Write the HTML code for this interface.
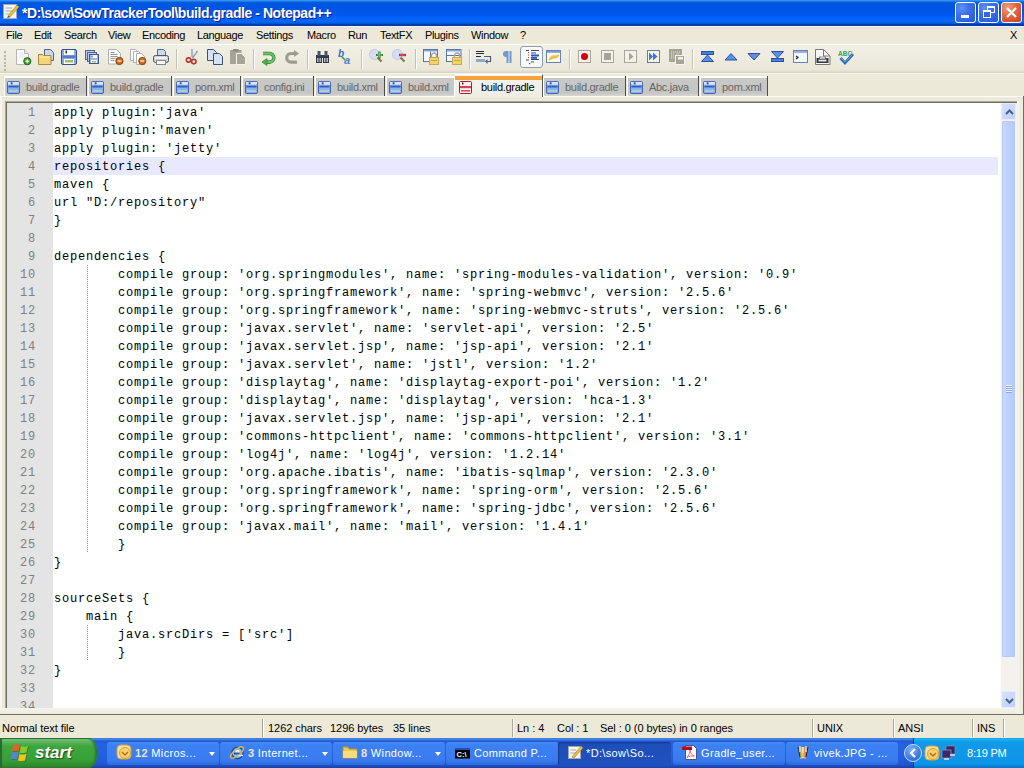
<!DOCTYPE html>
<html><head><meta charset="utf-8"><style>
*{margin:0;padding:0;box-sizing:border-box}
html,body{width:1024px;height:768px;overflow:hidden;background:#ECE9D8;font-family:"Liberation Sans",sans-serif;font-size:11px;color:#000}
.a{position:absolute}
#title{left:0;top:0;width:1024px;height:26px;background:linear-gradient(to bottom,#3B99FF 0px,#2C86F2 1px,#0D62D8 2px,#0058DE 3px,#0055E3 6px,#0055E8 12px,#0058F0 15px,#0064FC 18px,#0A66FA 21px,#0062EA 23px,#0047B8 24px,#0036A0 25px,#0036A0 26px)}
#ttl{left:22px;top:5px;color:#fff;font-weight:bold;font-size:14px;letter-spacing:-0.45px;white-space:nowrap;text-shadow:1px 1px 0 #0A1E8C}
.tb{top:2px;width:21px;height:21px;border:1px solid #fff;border-radius:3px}
.mi{top:29px;white-space:nowrap;letter-spacing:-0.35px}
.sep{top:49px;width:2px;height:20px;border-left:1px solid #C5C2B2;border-right:1px solid #fff}
.tab{top:76px;height:20px;background:linear-gradient(to bottom,#fff 0,#fff 2px,#C8C8C6 2px,#C6C6C4 17px,#D8D7D0 20px);border-right:1px solid #4E4D47;border-left:1px solid #fff}
.tab span{position:absolute;top:5px;white-space:nowrap;color:#666;letter-spacing:-0.3px}
.tab svg{position:absolute;left:2px;top:5px}
#ed{left:5px;top:101px;width:1013px;height:608px;border-top:1px solid #ACA899;border-left:1px solid #ACA899}
#ed2{left:6px;top:102px;width:1011px;height:606px;border-top:1px solid #716F64;border-left:1px solid #716F64;background:#fff;overflow:hidden}
#margin{left:0;top:0;width:46px;height:606px;background:#E4E4E4}
.ln{left:0;width:29px;text-align:right;font-family:"Liberation Mono",monospace;font-size:12px;letter-spacing:0.8px;color:#808080;height:18px;line-height:18px}
.cl{left:47px;font-family:"Liberation Mono",monospace;font-size:12px;letter-spacing:0.8px;color:#000;white-space:pre;height:18px;line-height:18px}
#cur{left:46px;top:54px;width:945px;height:18px;background:#E8E8FF}
.st{top:722px;white-space:nowrap;letter-spacing:-0.05px}
.ss{top:719px;width:2px;height:18px;border-left:1px solid #ACA899;border-right:1px solid #fff}
#task{left:0;top:738px;width:1024px;height:30px;background:linear-gradient(to bottom,#3168D5 0,#4993E6 1px,#2157D7 3px,#2663E0 6px,#245DDB 20px,#2157D7 26px,#1941A5 30px)}
.btn{top:742px;height:23px;border-radius:3px;background:linear-gradient(to bottom,#4B8BF5 0,#3C81F3 3px,#3A7BEF 18px,#2F68D8 23px);color:#fff;white-space:nowrap}
.btn span{position:absolute;left:39px;top:5px;letter-spacing:0.35px}
</style></head><body>

<div id="title" class="a"></div>
<svg class="a" style="left:2px;top:2px" width="18" height="18" viewBox="0 0 18 18">
<rect x="1.5" y="2.5" width="13" height="14" fill="#F4F4F0" stroke="#A0A8B8"/>
<line x1="3.5" y1="6" x2="10" y2="6" stroke="#C0A0A0"/><line x1="3.5" y1="9" x2="10" y2="9" stroke="#A0A0C0"/><line x1="3.5" y1="12" x2="8" y2="12" stroke="#A0C0A0"/>
<path d="M6 14 L15 3 L17 5 L8 15 Z" fill="#E8C040" stroke="#A08020" stroke-width="0.6"/>
<path d="M6 14 L5.2 16 L8 15 Z" fill="#403020"/>
</svg>
<div id="ttl" class="a">*D:\sow\SowTrackerTool\build.gradle - Notepad++</div>
<div class="a tb" style="left:955px;background:radial-gradient(circle at 30% 25%,#5E92F8 0,#3C6FE8 40%,#2558D8 100%)"><div class="a" style="left:5px;top:12px;width:8px;height:3px;background:#fff"></div></div>
<div class="a tb" style="left:978px;background:radial-gradient(circle at 30% 25%,#5E92F8 0,#3C6FE8 40%,#2558D8 100%)">
<div class="a" style="left:8px;top:3px;width:8px;height:7px;border:1px solid #fff;border-top-width:2px"></div>
<div class="a" style="left:4px;top:7px;width:8px;height:8px;border:1px solid #fff;border-top-width:2px;background:#3265E0"></div></div>
<div class="a tb" style="left:1001px;background:radial-gradient(circle at 30% 25%,#F0A080 0,#E46440 45%,#C8401E 100%)">
<svg class="a" style="left:3px;top:3px" width="13" height="13" viewBox="0 0 13 13"><path d="M2 2 L11 11 M11 2 L2 11" stroke="#fff" stroke-width="2.2"/></svg></div>
<div class="a" style="left:0;top:26px;width:1024px;height:4px;background:linear-gradient(to bottom,#F2F2F6 0,#F2F2F6 1px,#E6E4E0 1px,#E6E4DE 3px,#ECE9D8 4px)"></div>
<div class="a mi" style="left:6px">File</div>
<div class="a mi" style="left:34px">Edit</div>
<div class="a mi" style="left:64px">Search</div>
<div class="a mi" style="left:108px">View</div>
<div class="a mi" style="left:142px">Encoding</div>
<div class="a mi" style="left:197px">Language</div>
<div class="a mi" style="left:256px">Settings</div>
<div class="a mi" style="left:307px">Macro</div>
<div class="a mi" style="left:348px">Run</div>
<div class="a mi" style="left:380px">TextFX</div>
<div class="a mi" style="left:425px">Plugins</div>
<div class="a mi" style="left:471px">Window</div>
<div class="a mi" style="left:520px">?</div>
<div class="a mi" style="left:1010px">X</div>
<div class="a" style="left:0;top:44px;width:1024px;height:1px;background:#fff"></div>
<div class="a" style="left:0;top:45px;width:1024px;height:28px;background:linear-gradient(to bottom,#F1EFE5 0,#EFEDE1 10px,#EAE7D7 25px,#DDD9C8 27px,#D4D0BE 28px)"></div>
<div class="a" style="left:0;top:73px;width:1024px;height:1px;background:#F6F4EC"></div>
<div class="a" style="left:4px;top:51px;width:2px;height:2px;background:#B8B5A5"></div>
<div class="a" style="left:4px;top:55px;width:2px;height:2px;background:#B8B5A5"></div>
<div class="a" style="left:4px;top:58px;width:2px;height:2px;background:#B8B5A5"></div>
<div class="a" style="left:4px;top:62px;width:2px;height:2px;background:#B8B5A5"></div>
<div class="a" style="left:4px;top:65px;width:2px;height:2px;background:#B8B5A5"></div>
<div class="a" style="left:4px;top:69px;width:2px;height:2px;background:#B8B5A5"></div>
<div class="a sep" style="left:176px"></div>
<div class="a sep" style="left:253px"></div>
<div class="a sep" style="left:307px"></div>
<div class="a sep" style="left:361px"></div>
<div class="a sep" style="left:415px"></div>
<div class="a sep" style="left:469px"></div>
<div class="a sep" style="left:569px"></div>
<div class="a sep" style="left:692px"></div>
<div class="a" style="left:520px;top:46px;width:23px;height:22px;border:1px solid #8C9CB0;border-radius:3px;background:#FBFBF8"></div>
<svg class="a" style="left:15px;top:49px;overflow:visible" width="16" height="16" viewBox="0 0 16 16"><path d="M1.5 0.5h8l4 4v11h-12z" fill="#FDFDFD" stroke="#B4B4BC"/><path d="M9.5 0.5v4h4" fill="#EEE" stroke="#B4B4BC"/><path d="M4 4h4M4 6h6M4 8h6" stroke="#E4E4EA"/><circle cx="12.3" cy="12.2" r="3.6" fill="#4A9A3A" stroke="#2A6220"/><path d="M12.3 10.2v4M10.3 12.2h4" stroke="#C8F0B0" stroke-width="1.5"/></svg>
<svg class="a" style="left:38px;top:49px;overflow:visible" width="16" height="16" viewBox="0 0 16 16"><path d="M6.5 0.5h6l3 3v8h-9z" fill="#C8D8F4" stroke="#56647E"/><path d="M0.5 5.5h4l1 1h7.5v9h-12.5z" fill="#F4D47A" stroke="#A88A38"/><path d="M1 8h11" stroke="#FCEEB8"/></svg>
<svg class="a" style="left:61px;top:49px;overflow:visible" width="16" height="16" viewBox="0 0 16 16"><rect x="0.5" y="0.5" width="15" height="15" rx="1.5" fill="#8AAAE4" stroke="#34508C"/><rect x="3" y="1" width="10" height="5" fill="#fff"/><rect x="4.5" y="1.5" width="1.5" height="3" fill="#303030"/><rect x="1.5" y="6.5" width="13" height="2.5" fill="#5A78C8"/><rect x="3" y="10" width="10" height="5" fill="#fff"/><rect x="4" y="11" width="8" height="2.5" fill="#98C468"/></svg>
<svg class="a" style="left:85px;top:50px;overflow:visible" width="16" height="16" viewBox="0 0 16 16"><rect x="0.5" y="0.5" width="9" height="9" fill="#B8CCEC" stroke="#4A6498"/><rect x="2.5" y="2.5" width="9" height="9" fill="#B8CCEC" stroke="#4A6498"/><rect x="4.5" y="4.5" width="9" height="9" fill="#9AB4E4" stroke="#3C5690"/><rect x="6" y="5" width="6" height="3" fill="#fff"/><rect x="6.5" y="5.5" width="1" height="2" fill="#303030"/><rect x="6" y="10" width="6" height="3" fill="#fff"/><rect x="7" y="11" width="4" height="1.5" fill="#98C468"/></svg>
<svg class="a" style="left:108px;top:49px;overflow:visible" width="16" height="16" viewBox="0 0 16 16"><path d="M0.5 0.5h8l4 4v10.5h-12z" fill="#FDFDFD" stroke="#B0B0B0"/><path d="M2.5 3.5h4M2.5 5.5h7M2.5 7.5h7M2.5 9.5h5M2.5 11.5h4" stroke="#505050" stroke-width="0.6"/><circle cx="11.4" cy="12" r="3.6" fill="#D06A20" stroke="#8C4010"/><path d="M9.4 12h4" stroke="#F8D8A8" stroke-width="1.6"/></svg>
<svg class="a" style="left:130px;top:49px;overflow:visible" width="16" height="16" viewBox="0 0 16 16"><path d="M0.5 0.5h5l2 2v9h-7z" fill="#FDFDFD" stroke="#B0B0B0"/><path d="M3.5 2.5h5l2 2v9h-7z" fill="#FDFDFD" stroke="#B0B0B0"/><path d="M6.5 4.5h5l3 3v8h-8z" fill="#FDFDFD" stroke="#B0B0B0"/><circle cx="12.3" cy="12" r="3.6" fill="#D06A20" stroke="#8C4010"/><path d="M10.3 12h4" stroke="#F8D8A8" stroke-width="1.6"/></svg>
<svg class="a" style="left:153px;top:49px;overflow:visible" width="16" height="16" viewBox="0 0 16 16"><path d="M4.5 0.5h6l2 2v6h-8z" fill="#C4DAF4" stroke="#5A6888"/><rect x="0.5" y="6.5" width="15" height="7" rx="2" fill="#D4D4D4" stroke="#4E5660"/><rect x="2" y="8" width="12" height="2" fill="#F4F4F4"/><rect x="3.5" y="11.5" width="9" height="4" fill="#fff" stroke="#7C8490"/></svg>
<svg class="a" style="left:186px;top:49px;overflow:visible" width="16" height="16" viewBox="0 0 16 16"><path d="M6 0v8M11.5 2L6.5 9" stroke="#8C9CB4" stroke-width="1.3"/><circle cx="2.6" cy="11" r="2.2" fill="none" stroke="#B83A30" stroke-width="1.7"/><circle cx="7.8" cy="12.6" r="2.2" fill="none" stroke="#B83A30" stroke-width="1.7"/></svg>
<svg class="a" style="left:207px;top:49px;overflow:visible" width="16" height="16" viewBox="0 0 16 16"><path d="M0.5 0.5h6l3 3v8h-9z" fill="#D4E2F4" stroke="#3E5070"/><path d="M6.5 4.5h6l3 3v8h-9z" fill="#D4E2F4" stroke="#3E5070"/></svg>
<svg class="a" style="left:230px;top:49px;overflow:visible" width="16" height="16" viewBox="0 0 16 16"><rect x="0" y="1" width="11.5" height="14" fill="#A6A496"/><rect x="3" y="0" width="5.5" height="2.5" fill="#8E8C80"/><path d="M6.5 4.5h5l4 4v7h-9z" fill="#A6A496" stroke="#F4F4EE"/></svg>
<svg class="a" style="left:261px;top:51px;overflow:visible" width="16" height="16" viewBox="0 0 16 16"><path d="M2 2.5h6.5a4.3 4.3 0 0 1 0 8.6H5.5" fill="none" stroke="#3C8A3C" stroke-width="3.6"/><path d="M2 2.5h6.5a4.3 4.3 0 0 1 0 8.6H5.5" fill="none" stroke="#6CC46C" stroke-width="2"/><path d="M1 11l5-3.5v7z" fill="#4CAE4C" stroke="#3C8A3C" stroke-width="0.8"/></svg>
<svg class="a" style="left:285px;top:50px;overflow:visible" width="16" height="16" viewBox="0 0 16 16"><path d="M10 3.5H6a4.3 4.3 0 0 0 0 8.6h6" fill="none" stroke="#9E9C90" stroke-width="3.2"/><path d="M14 3.5L9 0v7z" fill="#9E9C90"/></svg>
<svg class="a" style="left:316px;top:51px;overflow:visible" width="16" height="16" viewBox="0 0 16 16"><rect x="0" y="4" width="6" height="8" fill="#323A48"/><rect x="7" y="4" width="6" height="8" fill="#323A48"/><rect x="1.5" y="0" width="3" height="5" fill="#4A5464"/><rect x="8.5" y="0" width="3" height="5" fill="#4A5464"/><rect x="5" y="4" width="3" height="3" fill="#323A48"/><rect x="1" y="7" width="1.5" height="4" fill="#B0B8C8"/><rect x="3.5" y="7" width="1.5" height="4" fill="#B0B8C8"/><rect x="8" y="7" width="1.5" height="4" fill="#B0B8C8"/><rect x="10.5" y="7" width="1.5" height="4" fill="#B0B8C8"/></svg>
<svg class="a" style="left:338px;top:49px;overflow:visible" width="16" height="16" viewBox="0 0 16 16"><text x="0" y="8" font-family="Liberation Sans" font-weight="bold" font-style="italic" font-size="10" fill="#3C6CC8">b</text><text x="6" y="15" font-family="Liberation Sans" font-weight="bold" font-style="italic" font-size="11" fill="#4A80D0">a</text><path d="M4 8l3 3" stroke="#3AA040" stroke-width="1.6"/></svg>
<svg class="a" style="left:369px;top:49px;overflow:visible" width="16" height="16" viewBox="0 0 16 16"><circle cx="5.5" cy="5.5" r="5" fill="#D4DEF6" stroke="#BCC8E8"/><path d="M8.5 8.5l4 4" stroke="#8A7448" stroke-width="2.2"/><path d="M10.5 2.5v7M7 6h7" stroke="#2E7E2E" stroke-width="2.2"/><path d="M10.5 3.5v5M8 6h5" stroke="#88D868" stroke-width="0.8"/></svg>
<svg class="a" style="left:392px;top:49px;overflow:visible" width="16" height="16" viewBox="0 0 16 16"><circle cx="5.5" cy="5.5" r="5" fill="#D4DEF6" stroke="#BCC8E8"/><path d="M8.5 8.5l4 4" stroke="#8A7448" stroke-width="2.2"/><path d="M7 6h7" stroke="#B82838" stroke-width="2.4"/><path d="M8 6h5" stroke="#F07080" stroke-width="0.8"/></svg>
<svg class="a" style="left:423px;top:49px;overflow:visible" width="16" height="16" viewBox="0 0 16 16"><rect x="0.5" y="0.5" width="14" height="12" fill="#F8FAFE" stroke="#5C74A4"/><rect x="1" y="1" width="13" height="1.5" fill="#8CA4D4"/><path d="M7.5 2.5v10" stroke="#5C74A4"/><path d="M8.5 8V6.5a2.5 2.5 0 0 1 5 0V8" fill="none" stroke="#A8A8A8" stroke-width="1.4"/><rect x="6.5" y="8.5" width="9" height="7" fill="#F2D46A" stroke="#C8A850"/><path d="M8 11.5h6" stroke="#C8A040" stroke-width="1"/></svg>
<svg class="a" style="left:446px;top:49px;overflow:visible" width="16" height="16" viewBox="0 0 16 16"><rect x="0.5" y="0.5" width="14.5" height="12" fill="#F8FAFE" stroke="#5C74A4"/><rect x="1" y="1" width="13.5" height="1.5" fill="#8CA4D4"/><path d="M1 6.5h14" stroke="#5C74A4"/><path d="M8.5 8V6.5a2.5 2.5 0 0 1 5 0V8" fill="none" stroke="#A8A8A8" stroke-width="1.4"/><rect x="6.5" y="8.5" width="9" height="7" fill="#F2D46A" stroke="#C8A850"/><path d="M8 11.5h6" stroke="#C8A040" stroke-width="1"/></svg>
<svg class="a" style="left:476px;top:50px;overflow:visible" width="16" height="16" viewBox="0 0 16 16"><path d="M0 1.5h8M0 3.5h8M0 6.5h5" stroke="#282C34" stroke-width="1.2"/><rect x="0" y="9" width="9" height="3" fill="#90A8D0"/><path d="M8 6.5h6.5v5h-4" fill="none" stroke="#4A5E80" stroke-width="1.2"/><path d="M9 11.5l2.5-2.5v5z" fill="#4A5E80"/></svg>
<svg class="a" style="left:502px;top:50px;overflow:visible" width="16" height="16" viewBox="0 0 16 16"><path d="M5.5 1v12M8.5 1v12" stroke="#7498CC" stroke-width="2"/><path d="M6 1H4a3 3 0 0 0 0 6h2z" fill="#7498CC"/></svg>
<svg class="a" style="left:525px;top:50px;overflow:visible" width="16" height="16" viewBox="0 0 16 16"><path d="M1 0.5h3M6 0.5h8M6 3h5M6 9.5h8M1 10h3M6 12h3" stroke="#3A4A6A" stroke-width="1.2"/><path d="M3.5 2v7" stroke="#C83030" stroke-dasharray="1 1.5"/><rect x="6" y="4.5" width="8" height="2" fill="#2C58C0"/><rect x="6" y="7" width="6" height="1.8" fill="#2C58C0"/><rect x="4" y="13" width="1.2" height="1.2" fill="#3A4A6A"/></svg>
<svg class="a" style="left:546px;top:50px;overflow:visible" width="16" height="16" viewBox="0 0 16 16"><rect x="0.5" y="0.5" width="14" height="12" fill="#FFFCEC" stroke="#6882B4"/><rect x="1" y="1" width="13" height="1.8" fill="#7C9CD4"/><path d="M3 10c1-4 4-5 6-4 2 0 3-1 4-1-1 2-2 3-4 3-2 0-3 1-6 2z" fill="#F4C840" stroke="#D8A020" stroke-width="0.6"/></svg>
<svg class="a" style="left:578px;top:50px;overflow:visible" width="16" height="16" viewBox="0 0 16 16"><rect x="0.5" y="0.5" width="12" height="12" fill="#F4F2EA" stroke="#A8A698"/><circle cx="6.5" cy="6.5" r="3.5" fill="#D00010"/></svg>
<svg class="a" style="left:601px;top:50px;overflow:visible" width="16" height="16" viewBox="0 0 16 16"><rect x="0.5" y="0.5" width="12" height="12" fill="#F4F2EA" stroke="#A8A698"/><rect x="3" y="3" width="7" height="7" fill="#A6A496"/></svg>
<svg class="a" style="left:624px;top:50px;overflow:visible" width="16" height="16" viewBox="0 0 16 16"><rect x="0.5" y="0.5" width="12" height="12" fill="#F4F2EA" stroke="#A8A698"/><path d="M5 2.5l4.5 4-4.5 4z" fill="#A6A496"/></svg>
<svg class="a" style="left:647px;top:50px;overflow:visible" width="16" height="16" viewBox="0 0 16 16"><rect x="0.5" y="0.5" width="12" height="12" fill="#F4F2EA" stroke="#6C7C98"/><path d="M2 2.5l4 4-4 4zM6 2.5l4.5 4-4.5 4z" fill="#3C78D8"/></svg>
<svg class="a" style="left:669px;top:49px;overflow:visible" width="16" height="16" viewBox="0 0 16 16"><rect x="0" y="0" width="13" height="13" fill="#A6A496"/><path d="M2 3h9M2 5h3M7 5h4M2 7h3M2 9h3" stroke="#E8E6DC" stroke-dasharray="1 1"/><rect x="6.5" y="6.5" width="9" height="9" fill="#A6A496" stroke="#F4F2EA"/><rect x="9" y="8" width="5" height="2.5" fill="#F4F2EA"/></svg>
<svg class="a" style="left:701px;top:51px;overflow:visible" width="16" height="16" viewBox="0 0 16 16"><rect x="0.5" y="0.5" width="12" height="3" fill="#4A80D8" stroke="#2A52A8"/><path d="M6.5 4L12.5 10.5H0.5z" fill="#5C90E0" stroke="#2A52A8"/></svg>
<svg class="a" style="left:725px;top:53px;overflow:visible" width="16" height="16" viewBox="0 0 16 16"><path d="M6 0.5L12 7H0z" fill="#5C90E0" stroke="#2A52A8"/></svg>
<svg class="a" style="left:748px;top:53px;overflow:visible" width="16" height="16" viewBox="0 0 16 16"><path d="M0 0.5h12L6 7z" fill="#5C90E0" stroke="#2A52A8"/></svg>
<svg class="a" style="left:771px;top:51px;overflow:visible" width="16" height="16" viewBox="0 0 16 16"><path d="M0.5 0.5h12L6.5 7z" fill="#5C90E0" stroke="#2A52A8"/><rect x="0.5" y="7.5" width="12" height="3" fill="#4A80D8" stroke="#2A52A8"/></svg>
<svg class="a" style="left:793px;top:50px;overflow:visible" width="16" height="16" viewBox="0 0 16 16"><rect x="0.5" y="0.5" width="14" height="12" fill="#F4F8FE" stroke="#6882B4"/><rect x="1" y="1" width="13" height="2" fill="#98B4DC"/><path d="M3 6l2 1.5-2 1.5" fill="none" stroke="#202020" stroke-width="1.2"/></svg>
<svg class="a" style="left:815px;top:49px;overflow:visible" width="16" height="16" viewBox="0 0 16 16"><path d="M0.5 0.5h8l6.5 6.5v8.5h-14.5z" fill="#F8F8F8" stroke="#787878"/><path d="M8.5 0.5v6.5h6.5" fill="none" stroke="#787878"/><rect x="1.5" y="9" width="12" height="5" fill="#383838"/><rect x="3.5" y="10.5" width="8" height="2" fill="#E8E8E8"/><rect x="4.5" y="8" width="6" height="2" fill="#fff" stroke="#383838" stroke-width="0.6"/></svg>
<svg class="a" style="left:838px;top:50px;overflow:visible" width="16" height="16" viewBox="0 0 16 16"><text x="0" y="5.8" font-family="Liberation Sans" font-weight="bold" font-size="6.5" fill="#3C9A60">ABC</text><path d="M2.5 8l4.5 5L15 4" fill="none" stroke="#2C6CB8" stroke-width="2.8"/><path d="M3 8l4 4.2L14.5 4.5" fill="none" stroke="#58A8E8" stroke-width="1"/></svg>
<div class="a" style="left:0;top:96px;width:1024px;height:1px;background:#fff"></div>
<div class="a tab" style="left:4px;width:83px;"><svg width="13" height="13" viewBox="0 0 14 14"><rect x="0.5" y="0.5" width="13" height="13" rx="1.5" fill="#8CB0EC" stroke="#3858B0"/><rect x="1" y="1" width="12" height="3" fill="#D8E4F8"/><rect x="1.5" y="5" width="11" height="2" fill="#3060C0"/><rect x="4" y="1.5" width="2" height="2" fill="#304880"/><rect x="2" y="10" width="10" height="1.5" fill="#B8D8D0"/></svg><span style="left:21px">build.gradle</span></div>
<div class="a tab" style="left:88px;width:84px;"><svg width="13" height="13" viewBox="0 0 14 14"><rect x="0.5" y="0.5" width="13" height="13" rx="1.5" fill="#8CB0EC" stroke="#3858B0"/><rect x="1" y="1" width="12" height="3" fill="#D8E4F8"/><rect x="1.5" y="5" width="11" height="2" fill="#3060C0"/><rect x="4" y="1.5" width="2" height="2" fill="#304880"/><rect x="2" y="10" width="10" height="1.5" fill="#B8D8D0"/></svg><span style="left:21px">build.gradle</span></div>
<div class="a tab" style="left:173px;width:68px;"><svg width="13" height="13" viewBox="0 0 14 14"><rect x="0.5" y="0.5" width="13" height="13" rx="1.5" fill="#8CB0EC" stroke="#3858B0"/><rect x="1" y="1" width="12" height="3" fill="#D8E4F8"/><rect x="1.5" y="5" width="11" height="2" fill="#3060C0"/><rect x="4" y="1.5" width="2" height="2" fill="#304880"/><rect x="2" y="10" width="10" height="1.5" fill="#B8D8D0"/></svg><span style="left:21px">pom.xml</span></div>
<div class="a tab" style="left:242px;width:72px;"><svg width="13" height="13" viewBox="0 0 14 14"><rect x="0.5" y="0.5" width="13" height="13" rx="1.5" fill="#8CB0EC" stroke="#3858B0"/><rect x="1" y="1" width="12" height="3" fill="#D8E4F8"/><rect x="1.5" y="5" width="11" height="2" fill="#3060C0"/><rect x="4" y="1.5" width="2" height="2" fill="#304880"/><rect x="2" y="10" width="10" height="1.5" fill="#B8D8D0"/></svg><span style="left:21px">config.ini</span></div>
<div class="a tab" style="left:315px;width:70px;"><svg width="13" height="13" viewBox="0 0 14 14"><rect x="0.5" y="0.5" width="13" height="13" rx="1.5" fill="#8CB0EC" stroke="#3858B0"/><rect x="1" y="1" width="12" height="3" fill="#D8E4F8"/><rect x="1.5" y="5" width="11" height="2" fill="#3060C0"/><rect x="4" y="1.5" width="2" height="2" fill="#304880"/><rect x="2" y="10" width="10" height="1.5" fill="#B8D8D0"/></svg><span style="left:21px">build.xml</span></div>
<div class="a tab" style="left:386px;width:69px;border-right:1px solid #fff;"><svg width="13" height="13" viewBox="0 0 14 14"><rect x="0.5" y="0.5" width="13" height="13" rx="1.5" fill="#8CB0EC" stroke="#3858B0"/><rect x="1" y="1" width="12" height="3" fill="#D8E4F8"/><rect x="1.5" y="5" width="11" height="2" fill="#3060C0"/><rect x="4" y="1.5" width="2" height="2" fill="#304880"/><rect x="2" y="10" width="10" height="1.5" fill="#B8D8D0"/></svg><span style="left:21px">build.xml</span></div>
<div class="a" style="left:455px;top:74px;width:88px;height:23px;background:linear-gradient(to bottom,#F6F5EE 0,#F2F0E8 10px,#EFEDE2 23px);border-top:1px solid #fff;border-right:1px solid #5A5850"><div class="a" style="left:0;top:1px;width:87px;height:4px;background:#F4A43C"></div><svg class="a" style="left:4px;top:6px" width="13" height="13" viewBox="0 0 13 13"><rect x="0.5" y="0.5" width="12" height="12" rx="1" fill="#FCF4F4" stroke="#A81C2C"/><rect x="1" y="5" width="11" height="2.2" fill="#D84050"/><rect x="3" y="1.5" width="1.5" height="2" fill="#502020"/><rect x="2" y="9" width="9" height="1.6" fill="#D85060"/></svg><span class="a" style="left:26px;top:6px;color:#000;white-space:nowrap;letter-spacing:-0.3px">build.gradle</span></div>
<div class="a tab" style="left:543px;width:83px;"><svg width="13" height="13" viewBox="0 0 14 14"><rect x="0.5" y="0.5" width="13" height="13" rx="1.5" fill="#8CB0EC" stroke="#3858B0"/><rect x="1" y="1" width="12" height="3" fill="#D8E4F8"/><rect x="1.5" y="5" width="11" height="2" fill="#3060C0"/><rect x="4" y="1.5" width="2" height="2" fill="#304880"/><rect x="2" y="10" width="10" height="1.5" fill="#B8D8D0"/></svg><span style="left:21px">build.gradle</span></div>
<div class="a tab" style="left:627px;width:72px;"><svg width="13" height="13" viewBox="0 0 14 14"><rect x="0.5" y="0.5" width="13" height="13" rx="1.5" fill="#8CB0EC" stroke="#3858B0"/><rect x="1" y="1" width="12" height="3" fill="#D8E4F8"/><rect x="1.5" y="5" width="11" height="2" fill="#3060C0"/><rect x="4" y="1.5" width="2" height="2" fill="#304880"/><rect x="2" y="10" width="10" height="1.5" fill="#B8D8D0"/></svg><span style="left:21px">Abc.java</span></div>
<div class="a tab" style="left:700px;width:68px;"><svg width="13" height="13" viewBox="0 0 14 14"><rect x="0.5" y="0.5" width="13" height="13" rx="1.5" fill="#8CB0EC" stroke="#3858B0"/><rect x="1" y="1" width="12" height="3" fill="#D8E4F8"/><rect x="1.5" y="5" width="11" height="2" fill="#3060C0"/><rect x="4" y="1.5" width="2" height="2" fill="#304880"/><rect x="2" y="10" width="10" height="1.5" fill="#B8D8D0"/></svg><span style="left:21px">pom.xml</span></div>
<div class="a" style="left:0;top:97px;width:2px;height:617px;background:#F8F7F0"></div>
<div id="ed" class="a"></div><div id="ed2" class="a">
<div id="margin" class="a"></div><div id="cur" class="a"></div>
<div class="a ln" style="top:1px">1</div>
<div class="a cl" style="top:1px">apply plugin:'java'</div>
<div class="a ln" style="top:19px">2</div>
<div class="a cl" style="top:19px">apply plugin:'maven'</div>
<div class="a ln" style="top:37px">3</div>
<div class="a cl" style="top:37px">apply plugin: 'jetty'</div>
<div class="a ln" style="top:55px">4</div>
<div class="a cl" style="top:55px">repositories {</div>
<div class="a ln" style="top:73px">5</div>
<div class="a cl" style="top:73px">maven {</div>
<div class="a ln" style="top:91px">6</div>
<div class="a cl" style="top:91px">url "D:/repository"</div>
<div class="a ln" style="top:109px">7</div>
<div class="a cl" style="top:109px">}</div>
<div class="a ln" style="top:127px">8</div>
<div class="a ln" style="top:145px">9</div>
<div class="a cl" style="top:145px">dependencies {</div>
<div class="a ln" style="top:163px">10</div>
<div class="a cl" style="top:163px">        compile group: 'org.springmodules', name: 'spring-modules-validation', version: '0.9'</div>
<div class="a ln" style="top:181px">11</div>
<div class="a cl" style="top:181px">        compile group: 'org.springframework', name: 'spring-webmvc', version: '2.5.6'</div>
<div class="a ln" style="top:199px">12</div>
<div class="a cl" style="top:199px">        compile group: 'org.springframework', name: 'spring-webmvc-struts', version: '2.5.6'</div>
<div class="a ln" style="top:217px">13</div>
<div class="a cl" style="top:217px">        compile group: 'javax.servlet', name: 'servlet-api', version: '2.5'</div>
<div class="a ln" style="top:235px">14</div>
<div class="a cl" style="top:235px">        compile group: 'javax.servlet.jsp', name: 'jsp-api', version: '2.1'</div>
<div class="a ln" style="top:253px">15</div>
<div class="a cl" style="top:253px">        compile group: 'javax.servlet', name: 'jstl', version: '1.2'</div>
<div class="a ln" style="top:271px">16</div>
<div class="a cl" style="top:271px">        compile group: 'displaytag', name: 'displaytag-export-poi', version: '1.2'</div>
<div class="a ln" style="top:289px">17</div>
<div class="a cl" style="top:289px">        compile group: 'displaytag', name: 'displaytag', version: 'hca-1.3'</div>
<div class="a ln" style="top:307px">18</div>
<div class="a cl" style="top:307px">        compile group: 'javax.servlet.jsp', name: 'jsp-api', version: '2.1'</div>
<div class="a ln" style="top:325px">19</div>
<div class="a cl" style="top:325px">        compile group: 'commons-httpclient', name: 'commons-httpclient', version: '3.1'</div>
<div class="a ln" style="top:343px">20</div>
<div class="a cl" style="top:343px">        compile group: 'log4j', name: 'log4j', version: '1.2.14'</div>
<div class="a ln" style="top:361px">21</div>
<div class="a cl" style="top:361px">        compile group: 'org.apache.ibatis', name: 'ibatis-sqlmap', version: '2.3.0'</div>
<div class="a ln" style="top:379px">22</div>
<div class="a cl" style="top:379px">        compile group: 'org.springframework', name: 'spring-orm', version: '2.5.6'</div>
<div class="a ln" style="top:397px">23</div>
<div class="a cl" style="top:397px">        compile group: 'org.springframework', name: 'spring-jdbc', version: '2.5.6'</div>
<div class="a ln" style="top:415px">24</div>
<div class="a cl" style="top:415px">        compile group: 'javax.mail', name: 'mail', version: '1.4.1'</div>
<div class="a ln" style="top:433px">25</div>
<div class="a cl" style="top:433px">        }</div>
<div class="a ln" style="top:451px">26</div>
<div class="a cl" style="top:451px">}</div>
<div class="a ln" style="top:469px">27</div>
<div class="a ln" style="top:487px">28</div>
<div class="a cl" style="top:487px">sourceSets {</div>
<div class="a ln" style="top:505px">29</div>
<div class="a cl" style="top:505px">    main {</div>
<div class="a ln" style="top:523px">30</div>
<div class="a cl" style="top:523px">        java.srcDirs = ['src']</div>
<div class="a ln" style="top:541px">31</div>
<div class="a cl" style="top:541px">        }</div>
<div class="a ln" style="top:559px">32</div>
<div class="a cl" style="top:559px">}</div>
<div class="a ln" style="top:577px">33</div>
<div class="a ln" style="top:595px">34</div>
<div class="a" style="left:80px;top:162px;width:1px;height:288px;background:repeating-linear-gradient(to bottom,#8C8C8C 0,#8C8C8C 1px,transparent 1px,transparent 2px)"></div>
<div class="a" style="left:80px;top:522px;width:1px;height:36px;background:repeating-linear-gradient(to bottom,#8C8C8C 0,#8C8C8C 1px,transparent 1px,transparent 2px)"></div>
<div class="a" style="left:993px;top:0;width:17px;height:606px;background:#F3F2EE;border-left:1px solid #FCFCFA"></div>
<div class="a" style="left:994px;top:0px;width:15px;height:17px;border-radius:2px;background:linear-gradient(135deg,#D6E2FE,#BED0FA);border:1px solid #E6EEFE"><svg class="a" style="left:3px;top:5px" width="9" height="6" viewBox="0 0 9 6"><path d="M1 5l3.5-3.5L8 5" fill="none" stroke="#4D6185" stroke-width="2"/></svg></div>
<div class="a" style="left:994px;top:17px;width:15px;height:538px;border-radius:2px;background:linear-gradient(to right,#CCDAFC,#BCD0FC 50%,#B6CAF8);border:1px solid #F0F4FE;box-shadow:inset 0 0 0 1px #B8C8F0"><div class="a" style="left:4px;top:264px;width:6px;height:8px;background:repeating-linear-gradient(to bottom,#EEF4FE 0,#EEF4FE 1px,#8CA8E0 1px,#8CA8E0 2px)"></div></div>
<div class="a" style="left:994px;top:588px;width:15px;height:17px;border-radius:2px;background:linear-gradient(135deg,#D6E2FE,#BED0FA);border:1px solid #E6EEFE"><svg class="a" style="left:3px;top:6px" width="9" height="6" viewBox="0 0 9 6"><path d="M1 1l3.5 3.5L8 1" fill="none" stroke="#4D6185" stroke-width="2"/></svg></div>
</div>
<div class="a" style="left:0;top:708px;width:1023px;height:6px;background:linear-gradient(to bottom,#F6F5EE 0,#F3F1E6 2px,#ECEADC 6px)"></div>
<div class="a" style="left:1017px;top:101px;width:6px;height:613px;background:linear-gradient(to right,#F6F5EE 0,#F3F1E6 2px,#ECEADC 6px)"></div>
<div class="a" style="left:1023px;top:96px;width:1px;height:619px;background:#716F64"></div>
<div class="a" style="left:0;top:714px;width:1024px;height:1px;background:#716F64"></div>
<div class="a st" style="left:2px">Normal text file</div>
<div class="a ss" style="left:262px"></div>
<div class="a ss" style="left:512px"></div>
<div class="a ss" style="left:812px"></div>
<div class="a ss" style="left:893px"></div>
<div class="a ss" style="left:972px"></div>
<div class="a ss" style="left:1003px"></div>
<div class="a st" style="left:268px">1262 chars</div>
<div class="a st" style="left:330px">1296 bytes</div>
<div class="a st" style="left:393px">35 lines</div>
<div class="a st" style="left:517px">Ln : 4</div>
<div class="a st" style="left:557px">Col : 1</div>
<div class="a st" style="left:600px">Sel : 0 (0 bytes) in 0 ranges</div>
<div class="a st" style="left:817px">UNIX</div>
<div class="a st" style="left:898px">ANSI</div>
<div class="a st" style="left:977px">INS</div>
<div id="task" class="a"></div>
<div class="a" style="left:0;top:738px;width:97px;height:30px;border-radius:0 9px 9px 0 / 0 12px 12px 0;background:linear-gradient(to bottom,#2E6A3A 0,#2E6A3A 1px,#78C078 1px,#5CB45C 4px,#3EA63E 8px,#38A038 22px,#2E8A2E 28px,#2A7C2A 30px);box-shadow:inset -2px 0 2px #2A7A2A,inset 2px 0 1px #286A34"></div>
<svg class="a" style="left:10px;top:743px" width="20" height="19" viewBox="0 0 20 19">
<path d="M3 2c2-1 5-1 7 0l-1.5 6.5c-2-1-4.5-1-6.5 0z" fill="#1A5A2A" opacity="0.5" transform="translate(0.8 0.8)"/>
<path d="M11 3c2 1 4 1 7 0l-1.5 6.5c-3 1-5 1-7 0z" fill="#1A5A2A" opacity="0.5" transform="translate(0.8 0.8)"/>
<path d="M2 10c2-1 4-1 6.5 0l-1.5 6.5c-2-1-4.5-1-6.5 0z" fill="#1A5A2A" opacity="0.5" transform="translate(0.8 0.8)"/>
<path d="M9.5 11c2 1 4 1 7 0l-1.5 6.5c-3 1-5 1-7 0z" fill="#1A5A2A" opacity="0.5" transform="translate(0.8 0.8)"/>
<path d="M3 2c2-1 5-1 7 0l-1.5 6.5c-2-1-4.5-1-6.5 0z" fill="#E0622A"/>
<path d="M11 3c2 1 4 1 7 0l-1.5 6.5c-3 1-5 1-7 0z" fill="#88C830"/>
<path d="M2 10c2-1 4-1 6.5 0l-1.5 6.5c-2-1-4.5-1-6.5 0z" fill="#5A80E8"/>
<path d="M9.5 11c2 1 4 1 7 0l-1.5 6.5c-3 1-5 1-7 0z" fill="#F4C418"/>
</svg>
<div class="a" style="left:35px;top:743px;color:#fff;font-weight:bold;font-style:italic;font-size:17px;text-shadow:1px 1px 1px #1A4A1A">start</div>
<div class="a btn" style="left:107px;width:112px;"><svg class="a" style="left:9px;top:2px" width="16" height="16" viewBox="0 0 16 16"><rect x="1" y="1" width="14" height="14" rx="4" fill="#F8E0A0" stroke="#D8A040"/><circle cx="9" cy="9" r="5.5" fill="#FAD070" stroke="#E0A030"/><path d="M6 8l3 3 3-3" fill="none" stroke="#B07018" stroke-width="1.5"/></svg><span style="left:28px"><b style="color:#EDE6CC">12</b> Micros...</span><svg class="a" style="left:102px;top:10px" width="6" height="4"><path d="M0 0h6L3 4z" fill="#fff"/></svg></div>
<div class="a btn" style="left:220px;width:112px;"><svg class="a" style="left:9px;top:2px" width="16" height="16" viewBox="0 0 16 16"><circle cx="8.5" cy="9" r="5.6" fill="#7CC4F4" stroke="#1648A8" stroke-width="1.3"/><circle cx="8.5" cy="8" r="2.2" fill="#E8F6FE"/><path d="M5 9.5h7" stroke="#1648A8" stroke-width="1.8"/><path d="M9 11.5h5" stroke="#E8F6FE" stroke-width="1.2"/><ellipse cx="8" cy="8.5" rx="8" ry="3" transform="rotate(-40 8 8.5)" fill="none" stroke="#E8B040" stroke-width="1.3"/></svg><span style="left:28px"><b style="color:#EDE6CC">3</b> Internet...</span><svg class="a" style="left:102px;top:10px" width="6" height="4"><path d="M0 0h6L3 4z" fill="#fff"/></svg></div>
<div class="a btn" style="left:333px;width:112px;"><svg class="a" style="left:9px;top:2px" width="16" height="16" viewBox="0 0 16 16"><path d="M1 3h5l1 2h8v9H1z" fill="#F0C850" stroke="#B89030"/><path d="M1 7h14v7H1z" fill="#F8DC80"/></svg><span style="left:28px"><b style="color:#EDE6CC">8</b> Window...</span><svg class="a" style="left:102px;top:10px" width="6" height="4"><path d="M0 0h6L3 4z" fill="#fff"/></svg></div>
<div class="a btn" style="left:446px;width:112px;"><svg class="a" style="left:9px;top:2px" width="16" height="16" viewBox="0 0 16 16"><rect x="0" y="4" width="15" height="2.5" fill="#2050B0"/><rect x="0" y="6" width="15" height="8.5" fill="#000"/><text x="1.5" y="13" font-family="Liberation Sans" font-weight="bold" font-size="7.5" fill="#fff">C:\</text></svg><span style="left:28px">Command P...</span></div>
<div class="a btn" style="left:558px;width:113px;background:linear-gradient(to bottom,#1A46A8 0,#1E4EB8 2px,#2050BC 20px,#2252C0 23px);box-shadow:inset 1px 1px 1px #143A90"><svg class="a" style="left:9px;top:2px" width="16" height="16" viewBox="0 0 16 16"><rect x="1.5" y="2.5" width="12" height="12" fill="#F4F4F0" stroke="#A0A8B8"/><line x1="3.5" y1="6" x2="9" y2="6" stroke="#C0A0A0"/><line x1="3.5" y1="9" x2="9" y2="9" stroke="#A0A0C0"/><path d="M5 13 L14 2 L16 4 L7 14 Z" fill="#E8C040" stroke="#A08020" stroke-width="0.6"/></svg><span style="left:28px">*D:\sow\So...</span></div>
<div class="a btn" style="left:673px;width:112px;"><svg class="a" style="left:9px;top:2px" width="16" height="16" viewBox="0 0 16 16"><path d="M3.5 1.5h8l3 3v11h-11z" fill="#fff" stroke="#303860" stroke-width="0.8"/><rect x="0" y="2.5" width="10" height="3.5" fill="#B01020"/><path d="M5 13.5c2-3 3-5 3-7.5 0 3 2 5 4.5 6-3 0-5.5 0-7.5 1.5z" fill="none" stroke="#D06060" stroke-width="0.9"/></svg><span style="left:28px">Gradle_user...</span></div>
<div class="a btn" style="left:786px;width:112px;"><svg class="a" style="left:9px;top:2px" width="16" height="16" viewBox="0 0 16 16"><defs><linearGradient id="jg" x1="0" y1="0" x2="1" y2="0"><stop offset="0" stop-color="#40A040"/><stop offset="0.45" stop-color="#F0C050"/><stop offset="1" stop-color="#D04030"/></linearGradient></defs><path d="M3 3l2 10c0.5 2 5.5 2 6 0l2-10" fill="url(#jg)" stroke="#202848" stroke-width="1"/><path d="M5 2v6M8 3v6M11 2v6" stroke="#F0F0F8" stroke-width="1.2"/><path d="M5 14h6" stroke="#F0F0F0" stroke-width="1"/></svg><span style="left:28px">vivek.JPG - ...</span></div>
<div class="a" style="left:913px;top:738px;width:111px;height:30px;background:linear-gradient(to bottom,#1290E8 0,#19B9F3 1px,#109AE8 4px,#0C95E8 26px,#0A70C8 30px);border-left:1px solid #0A3C9C"></div>
<div class="a" style="left:904px;top:744px;width:18px;height:18px;border-radius:50%;background:radial-gradient(circle at 40% 30%,#7EB4F8,#3A78E0 60%,#2A5CC8);border:1px solid #C8DCFA"><svg class="a" style="left:4px;top:3px" width="8" height="10"><path d="M6 1L2 5l4 4" fill="none" stroke="#fff" stroke-width="2.2"/></svg></div>
<svg class="a" style="left:924px;top:745px" width="16" height="16" viewBox="0 0 16 16"><rect x="1" y="1" width="14" height="14" rx="4" fill="#F8E0A0" stroke="#D8A040"/><circle cx="9" cy="9" r="5.5" fill="#FAD070" stroke="#E0A030"/><path d="M6 8l3 3 3-3" fill="none" stroke="#B07018" stroke-width="1.5"/></svg>
<svg class="a" style="left:941px;top:745px" width="16" height="16" viewBox="0 0 16 16"><rect x="5" y="1" width="9" height="8" fill="#302860" stroke="#8080C0" stroke-width="0.8"/><rect x="1" y="5" width="9" height="8" fill="#382C68" stroke="#9090C8" stroke-width="0.8"/><path d="M3 14h5M9 10h5" stroke="#E0E0F0" stroke-width="1.5"/></svg>
<div class="a" style="left:967px;top:747px;color:#fff;white-space:nowrap;letter-spacing:-0.2px">8:19 PM</div>
</body></html>
